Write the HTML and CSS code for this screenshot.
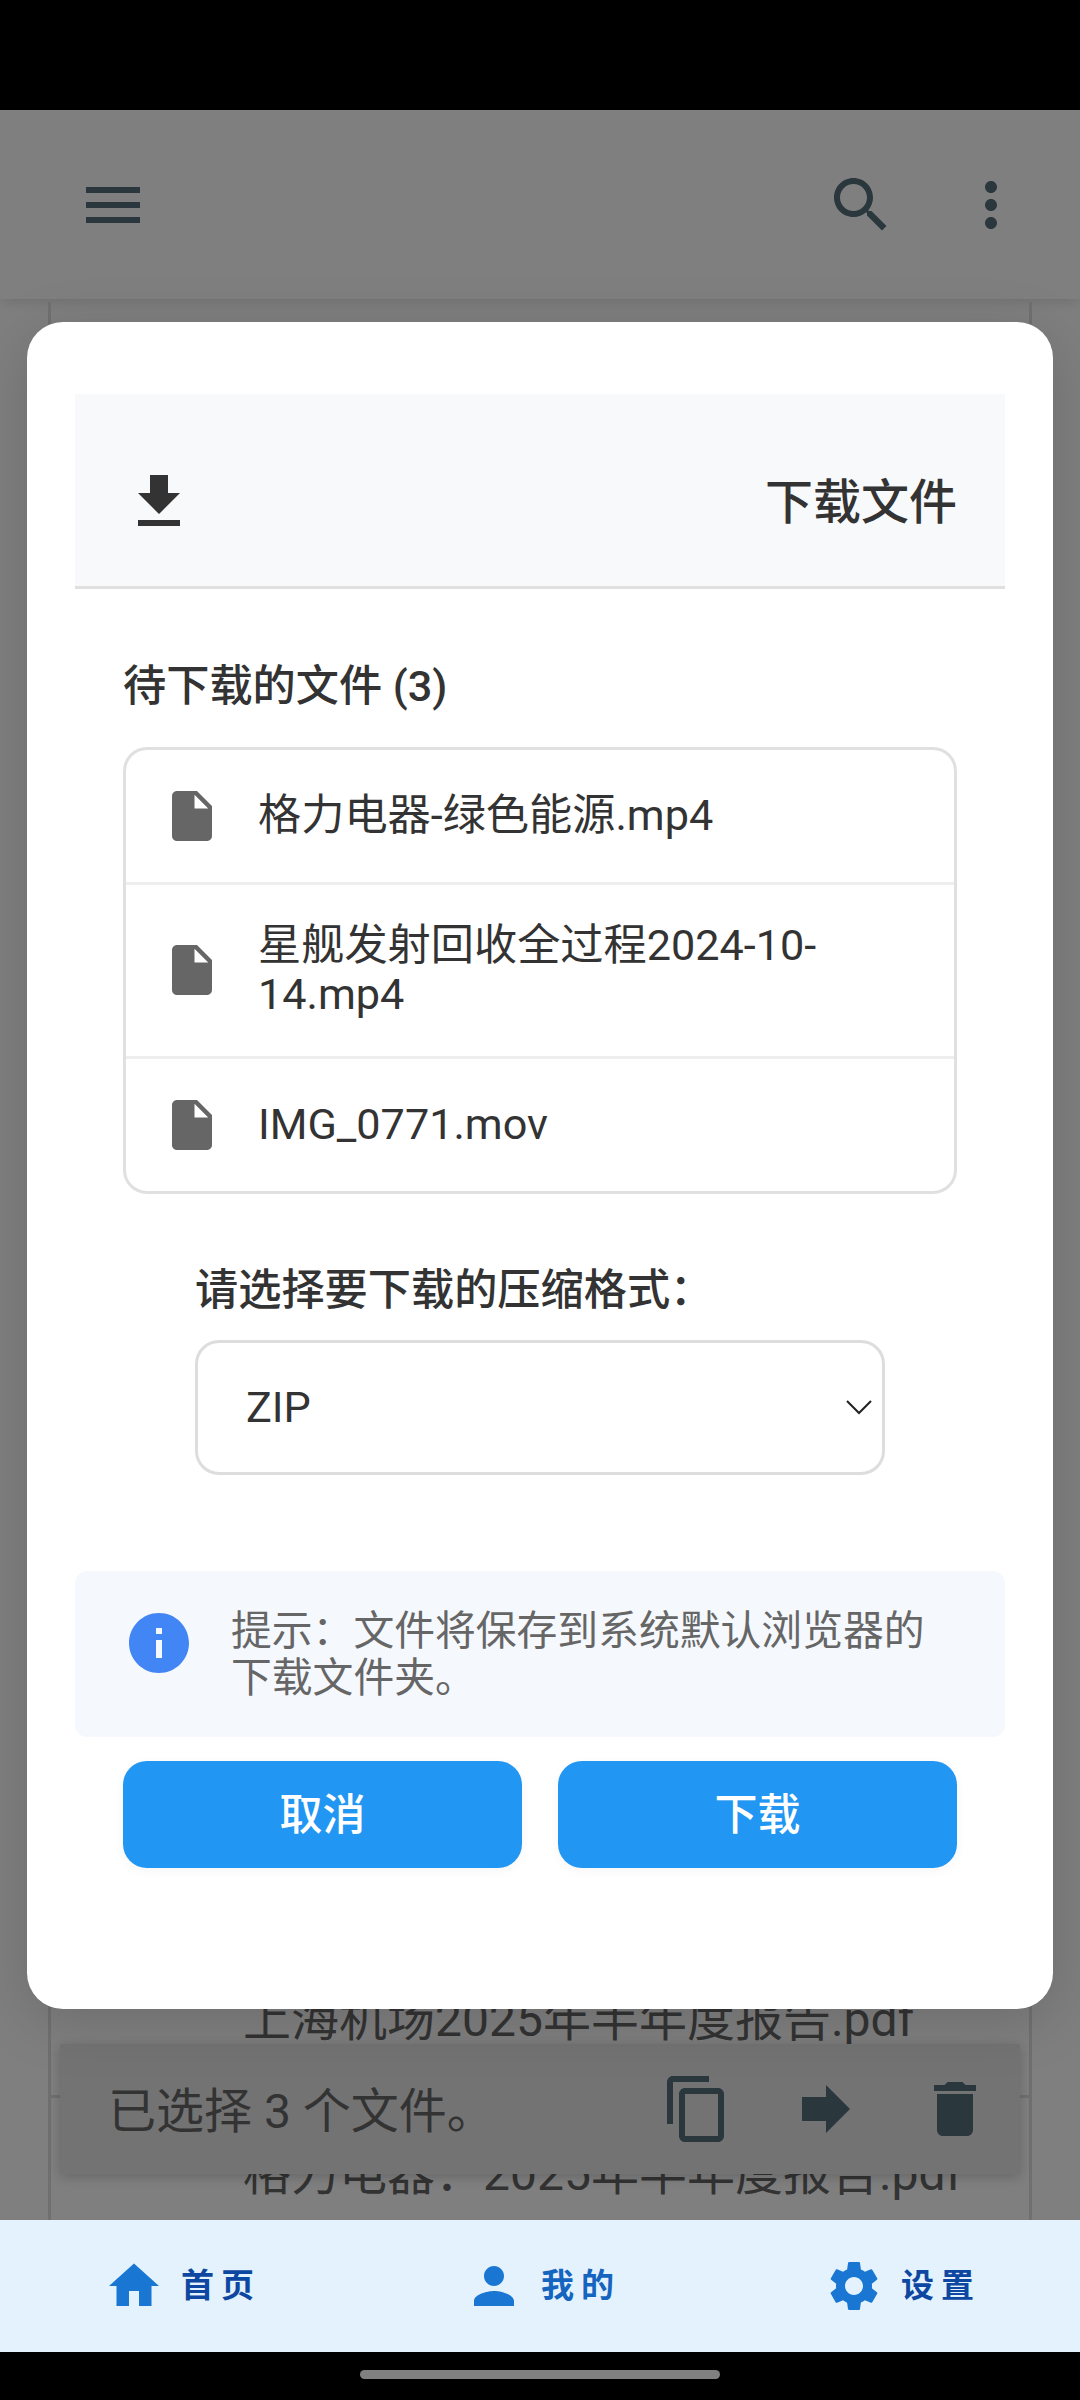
FILE: index.html
```
<!DOCTYPE html>
<html lang="zh-CN">
<head>
    <meta charset="UTF-8">
    <meta name="viewport" content="width=device-width, initial-scale=1.0">
    <title>下载文件</title>
    <link rel="stylesheet" href="styles.css">
</head>
<body>

    <div class="status-bar"></div>

    <div class="app">
        <!-- 顶部栏 -->
        <header class="top-bar">
            <svg class="icon" viewBox="0 0 24 24"><path d="M3 18h18v-2H3v2zm0-5h18v-2H3v2zm0-7v2h18V6H3z"/></svg>
            <div class="top-actions">
                <svg class="icon" viewBox="0 0 24 24"><path d="M15.5 14h-.79l-.28-.27C15.41 12.59 16 11.11 16 9.5 16 5.91 13.09 3 9.5 3S3 5.91 3 9.5 5.91 16 9.5 16c1.61 0 3.09-.59 4.23-1.57l.27.28v.79l5 4.99L20.49 19l-4.99-5zm-6 0C7.01 14 5 11.99 5 9.5S7.01 5 9.5 5 14 7.01 14 9.5 11.99 14 9.5 14z"/></svg>
                <svg class="icon" viewBox="0 0 24 24"><path d="M12 8c1.1 0 2-.9 2-2s-.9-2-2-2-2 .9-2 2 .9 2 2 2zm0 2c-1.1 0-2 .9-2 2s.9 2 2 2 2-.9 2-2-.9-2-2-2zm0 6c-1.1 0-2 .9-2 2s.9 2 2 2 2-.9 2-2-.9-2-2-2z"/></svg>
            </div>
        </header>

        <!-- 文件列表 -->
        <main class="file-card">
            <div class="file-row">上海机场2025年半年度报告.pdf</div>
            <div class="file-row">格力电器：2025年半年度报告.pdf</div>
        </main>

        <!-- 选择工具栏 -->
        <div class="selection-bar">
            <span class="selection-text">已选择 3 个文件。</span>
            <svg class="icon" viewBox="0 0 24 24"><path d="M16 1H4c-1.1 0-2 .9-2 2v14h2V3h12V1zm3 4H8c-1.1 0-2 .9-2 2v14c0 1.1.9 2 2 2h11c1.1 0 2-.9 2-2V7c0-1.1-.9-2-2-2zm0 16H8V7h11v14z"/></svg>
            <svg class="icon" viewBox="0 0 24 24"><path d="M12 8V4l8 8-8 8v-4H4V8z"/></svg>
            <svg class="icon" viewBox="0 0 24 24"><path d="M6 19c0 1.1.9 2 2 2h8c1.1 0 2-.9 2-2V7H6v12zM19 4h-3.5l-1-1h-5l-1 1H5v2h14V4z"/></svg>
        </div>

        <!-- 下载对话框 -->
        <div class="overlay">
            <div class="modal">
                <div class="modal-header">
                    <svg class="icon" viewBox="0 0 24 24"><path d="M19 9h-4V3H9v6H5l7 7 7-7zM5 18v2h14v-2H5z"/></svg>
                    <h2>下载文件</h2>
                </div>

                <div class="modal-body">
                    <h3>待下载的文件 (3)</h3>
                    <ul class="download-list">
                        <li>
                            <svg viewBox="0 0 24 24"><path d="M6 2c-1.1 0-1.99.9-1.99 2L4 20c0 1.1.89 2 1.99 2H18c1.1 0 2-.9 2-2V8l-6-6H6zm7 7V3.5L18.5 9H13z"/></svg>
                            <span>格力电器-绿色能源.mp4</span>
                        </li>
                        <li>
                            <svg viewBox="0 0 24 24"><path d="M6 2c-1.1 0-1.99.9-1.99 2L4 20c0 1.1.89 2 1.99 2H18c1.1 0 2-.9 2-2V8l-6-6H6zm7 7V3.5L18.5 9H13z"/></svg>
                            <span>星舰发射回收全过程2024-10-<br>14.mp4</span>
                        </li>
                        <li>
                            <svg viewBox="0 0 24 24"><path d="M6 2c-1.1 0-1.99.9-1.99 2L4 20c0 1.1.89 2 1.99 2H18c1.1 0 2-.9 2-2V8l-6-6H6zm7 7V3.5L18.5 9H13z"/></svg>
                            <span>IMG_0771.mov</span>
                        </li>
                    </ul>

                    <div class="format">
                        <label for="format">请选择要下载的压缩格式：</label>
                        <div class="select-box">
                            <select id="format">
                                <option>ZIP</option>
                            </select>
                            <svg viewBox="0 0 28 16"><path d="M2 2l12 12L26 2"/></svg>
                        </div>
                    </div>
                </div>

                <div class="hint">
                    <svg class="icon" viewBox="0 0 24 24"><path d="M12 2C6.48 2 2 6.48 2 12s4.48 10 10 10 10-4.48 10-10S17.52 2 12 2zm1 15h-2v-6h2v6zm0-8h-2V7h2v2z"/></svg>
                    <p>提示：文件将保存到系统默认浏览器的<br>下载文件夹。</p>
                </div>

                <div class="buttons">
                    <button>取消</button>
                    <button>下载</button>
                </div>
            </div>
        </div>
    </div>

    <!-- 底部导航 -->
    <nav class="bottom-nav">
        <a class="nav-item">
            <svg viewBox="0 0 24 24"><path d="M10 20v-6h4v6h5v-8h3L12 3 2 12h3v8z"/></svg>
            <span>首页</span>
        </a>
        <a class="nav-item current">
            <svg viewBox="0 0 24 24"><path d="M12 12c2.21 0 4-1.79 4-4s-1.79-4-4-4-4 1.79-4 4 1.79 4 4 4zm0 2c-2.67 0-8 1.34-8 4v2h16v-2c0-2.66-5.33-4-8-4z"/></svg>
            <span>我的</span>
        </a>
        <a class="nav-item">
            <svg viewBox="0 0 24 24"><path d="M19.14 12.94c.04-.3.06-.61.06-.94 0-.32-.02-.64-.07-.94l2.03-1.58c.18-.14.23-.41.12-.61l-1.92-3.32c-.12-.22-.37-.29-.59-.22l-2.39.96c-.5-.38-1.03-.7-1.62-.94l-.36-2.54c-.04-.24-.24-.41-.48-.41h-3.84c-.24 0-.43.17-.47.41l-.36 2.54c-.59.24-1.13.57-1.62.94l-2.39-.96c-.22-.08-.47 0-.59.22L2.74 8.87c-.12.21-.08.47.12.61l2.03 1.58c-.05.3-.09.63-.09.94s.02.64.07.94l-2.03 1.58c-.18.14-.23.41-.12.61l1.92 3.32c.12.22.37.29.59.22l2.39-.96c.5.38 1.03.7 1.62.94l.36 2.54c.05.24.24.41.48.41h3.84c.24 0 .44-.17.47-.41l.36-2.54c.59-.24 1.13-.56 1.62-.94l2.39.96c.22.08.47 0 .59-.22l1.92-3.32c.12-.22.07-.47-.12-.61l-2.01-1.58zM12 15.6c-1.98 0-3.6-1.62-3.6-3.6s1.62-3.6 3.6-3.6 3.6 1.62 3.6 3.6-1.62 3.6-3.6 3.6z"/></svg>
            <span>设置</span>
        </a>
    </nav>

    <div class="gesture-bar"><div class="gesture-handle"></div></div>

</body>
</html>
```
FILE: styles.css
```
* {
    box-sizing: border-box;
}

body {
    font-family: Roboto, "Noto Sans CJK SC", sans-serif;
    margin: 0;
    height: 2400px;
    display: flex;
    flex-direction: column;
    background-color: #000;
    color: #333;
}

h2, h3, p, ul {
    margin: 0;
    padding: 0;
}

svg {
    display: block;
    flex-shrink: 0;
    fill: currentColor;
}

.icon {
    width: 72px;
    height: 72px;
}

.status-bar {
    height: 110px;
}

.app {
    position: relative;
    height: 2110px;
    display: flex;
    flex-direction: column;
    overflow: hidden;
    background-color: #fff;
}

/* 顶部栏 */
.top-bar {
    height: 189px;
    flex-shrink: 0;
    display: flex;
    justify-content: space-between;
    align-items: center;
    padding: 0 53px 0 77px;
    color: #546e7a;
    background-color: #fff;
    box-shadow: 0 3px 12px rgba(0, 0, 0, 0.12);
}

.top-actions {
    display: flex;
    gap: 58px;
}

/* 文件列表 */
.file-card {
    flex: 1;
    display: flex;
    flex-direction: column;
    justify-content: flex-end;
    margin: 3px 48px -32px;
    border: 3px solid #e0e0e0;
    border-top: none;
    border-bottom: none;
}

.file-row {
    height: 154px;
    line-height: 151px;
    padding-left: 192px;
    border-bottom: 3px solid #e0e0e0;
    font-size: 48px;
    color: #666;
}

.selection-bar {
    position: absolute;
    left: 60px;
    right: 60px;
    bottom: 46px;
    height: 130px;
    display: flex;
    align-items: center;
    gap: 57px;
    padding: 0 29px 0 48px;
    background-color: #e6e6e6;
    color: #546e7a;
    box-shadow: 0 3px 12px rgba(0, 0, 0, 0.2);
}

.selection-text {
    flex: 1;
    padding-bottom: 5px;
    font-size: 48px;
    color: #666;
}

/* 对话框 */
.overlay {
    position: absolute;
    inset: 0;
    display: flex;
    justify-content: center;
    align-items: center;
    background-color: rgba(0, 0, 0, 0.5);
}

.modal {
    width: 1026px;
    padding: 72px 48px 140px;
    background-color: #fff;
    border-radius: 36px;
    box-shadow: 0 12px 60px rgba(0, 0, 0, 0.15);
}

.modal-header {
    height: 195px;
    display: flex;
    justify-content: space-between;
    align-items: center;
    padding: 24px 48px 0;
    background-color: #f8f9fb;
    border-bottom: 3px solid #e0e0e0;
}

.modal-header h2 {
    padding-bottom: 7px;
    font-size: 48px;
    font-weight: 500;
}

.modal-body {
    padding: 73px 48px 0;
}

.modal-body h3 {
    font-size: 43.2px;
    font-weight: 500;
    line-height: 50px;
    margin-bottom: 35px;
}

.download-list {
    list-style: none;
    border: 3px solid #e0e0e0;
    border-radius: 24px;
}

.download-list li {
    display: flex;
    align-items: center;
    gap: 36px;
    padding: 36px;
    border-bottom: 3px solid #eee;
    font-size: 43.2px;
    line-height: 49.5px;
}

.download-list li:last-child {
    border-bottom: none;
}

.download-list svg {
    width: 60px;
    height: 60px;
    color: #666;
}

.format {
    padding: 72px 72px 0;
}

.format label {
    display: block;
    font-size: 43.2px;
    font-weight: 500;
    line-height: 50px;
    margin-bottom: 24px;
}

.select-box {
    height: 135px;
    display: flex;
    align-items: center;
    padding: 0 9px 0 48px;
    border: 3px solid #ddd;
    border-radius: 24px;
}

.select-box select {
    flex: 1;
    appearance: none;
    padding: 0;
    border: none;
    background: none;
    font-family: inherit;
    font-size: 43.2px;
    color: #333;
}

.select-box svg {
    width: 28px;
    height: 16px;
    fill: none;
    stroke: #222;
    stroke-width: 2;
}

.hint {
    display: flex;
    gap: 36px;
    height: 166px;
    margin-top: 96px;
    padding: 36px 48px;
    border-radius: 12px;
    background-color: #f5f8fd;
}

.hint svg {
    color: #4285f4;
}

.hint p {
    padding-top: 1px;
    font-size: 40.8px;
    line-height: 47px;
    white-space: nowrap;
    color: #666;
}

.buttons {
    display: flex;
    gap: 36px;
    padding: 24px 48px 1px;
}

button {
    flex: 1;
    height: 107px;
    padding: 0 0 7px;
    border: none;
    border-radius: 24px;
    background-color: #2196f3;
    color: white;
    font-family: inherit;
    font-size: 43px;
    font-weight: 500;
    box-shadow: 0 3px 12px rgba(0, 0, 0, 0.04);
    cursor: pointer;
}

/* 底部导航 */
.bottom-nav {
    height: 132px;
    display: flex;
    background-color: #e3f2fd;
}

.nav-item {
    flex: 1;
    display: flex;
    align-items: center;
    gap: 17px;
    padding-left: 104px;
    color: #1976d2;
}

.nav-item svg {
    width: 60px;
    height: 60px;
}

.nav-item span {
    padding-bottom: 7px;
    font-family: KaiTi, STKaiti, "Noto Sans CJK SC", sans-serif;
    font-size: 33px;
    font-weight: 700;
    letter-spacing: 7px;
    color: #0d47a1;
}

.nav-item.current span {
    color: #1565c0;
}

.gesture-bar {
    height: 48px;
    display: flex;
    justify-content: center;
    padding-top: 18px;
}

.gesture-handle {
    width: 360px;
    height: 9px;
    border-radius: 5px;
    background-color: #808080;
}
```
